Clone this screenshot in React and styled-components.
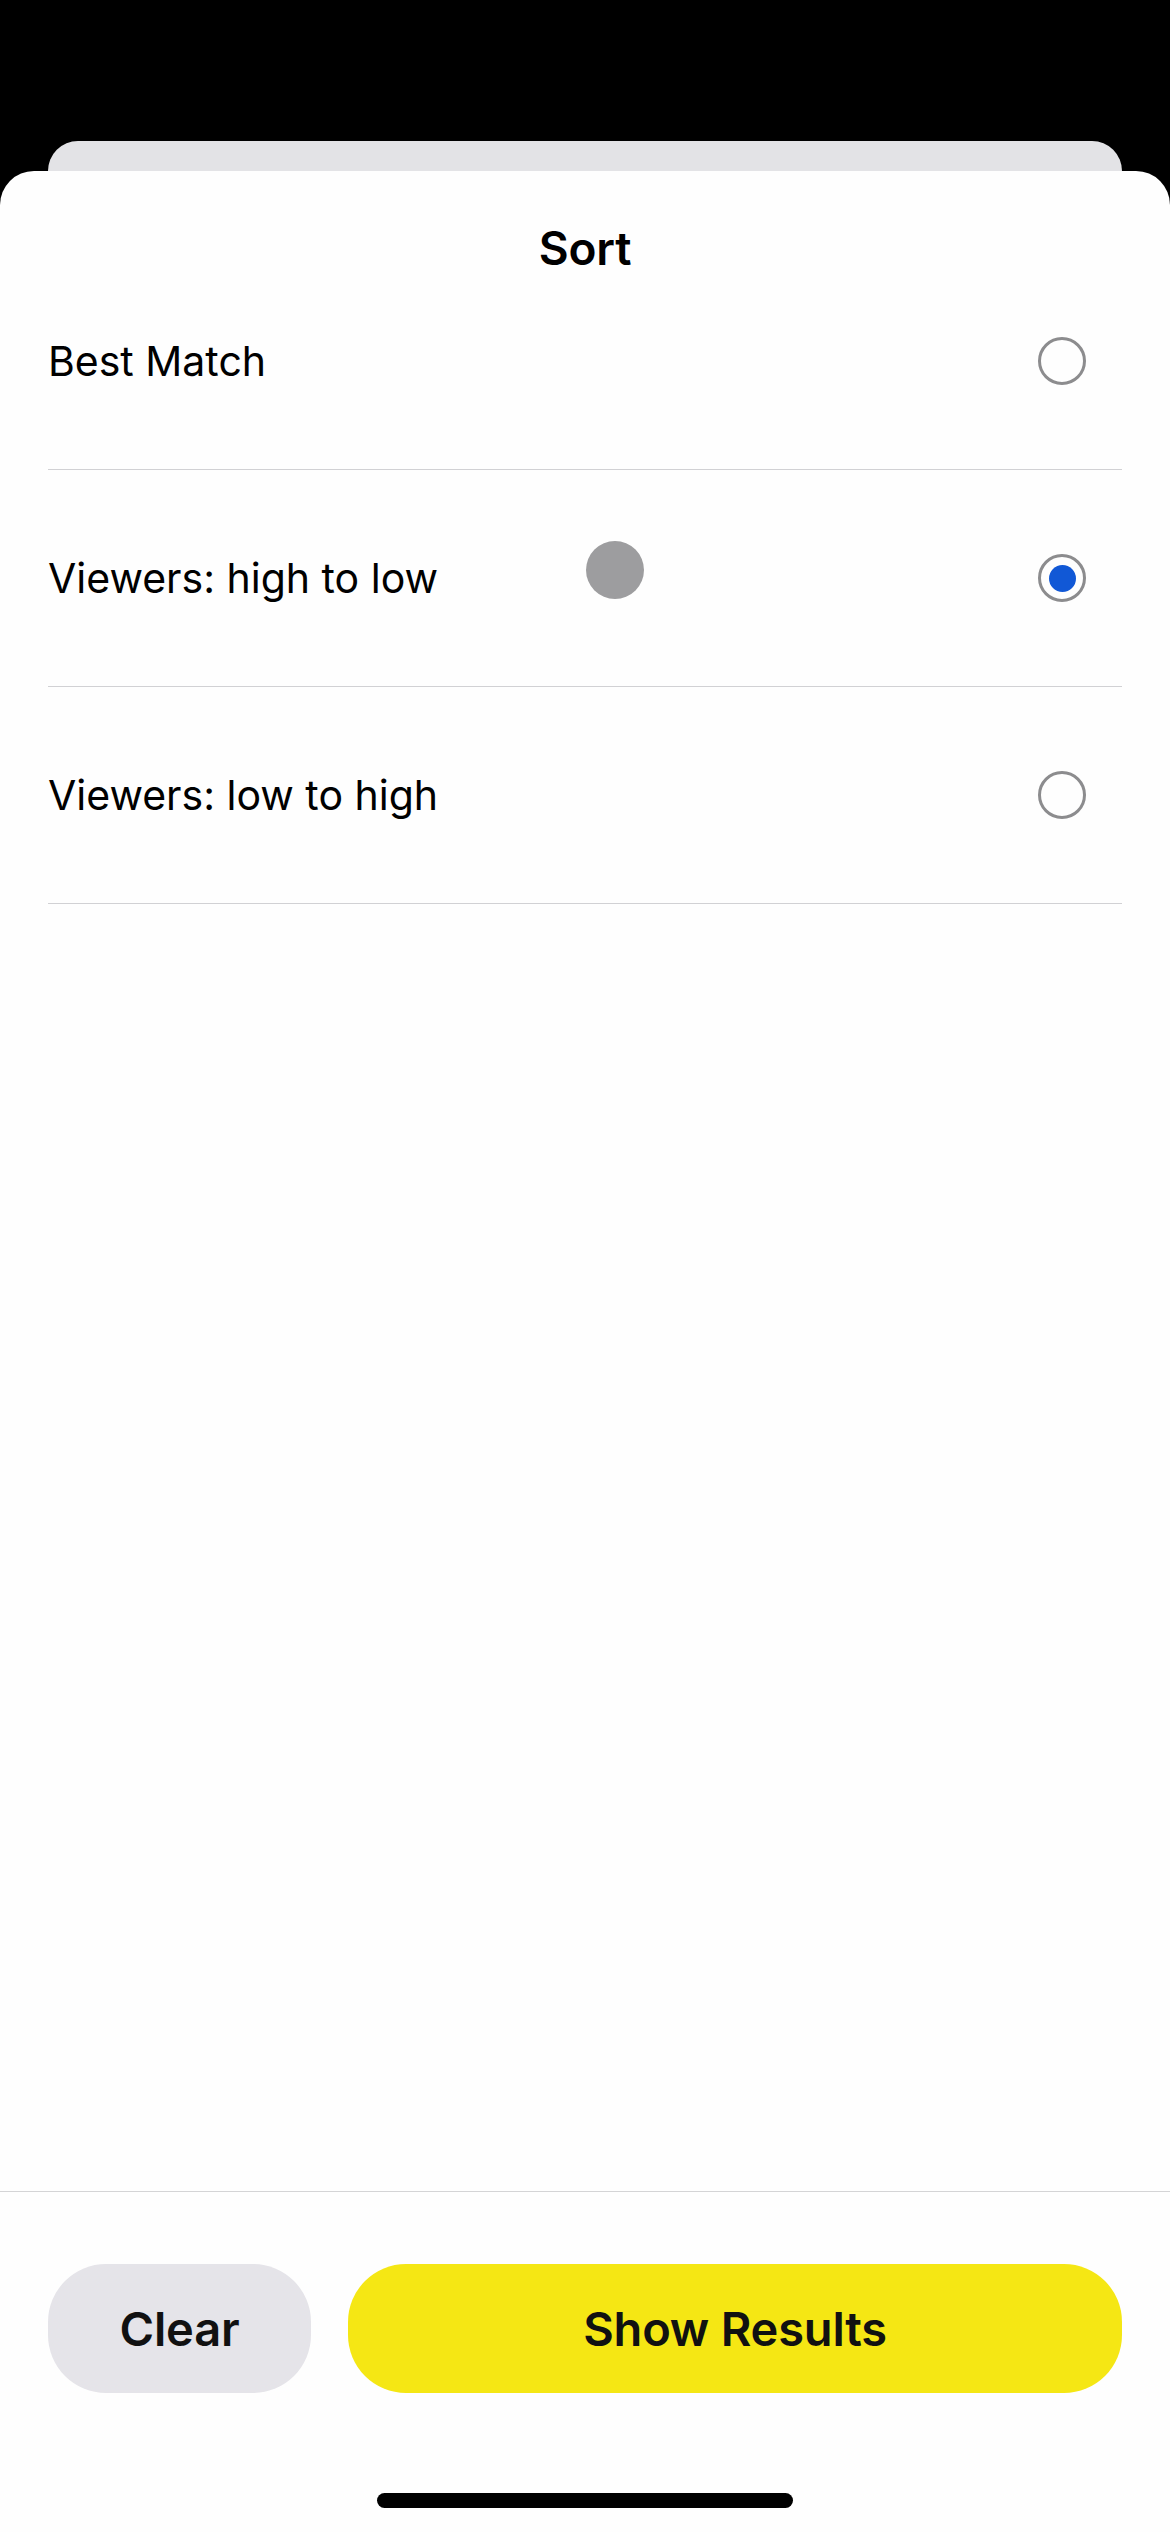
import React from "react";
import styled, { createGlobalStyle } from "styled-components";

const Global = createGlobalStyle`
  html, body { margin: 0; padding: 0; background: #000; }
  body { font-family: Inter, "Noto Sans", "Liberation Sans", sans-serif; -webkit-font-smoothing: antialiased; }
  * { box-sizing: border-box; }
`;

const Screen = styled.div`
  width: 1170px;
  height: 2532px;
  background: #000;
  display: flex;
  flex-direction: column;
  overflow: hidden;
`;

const BackCard = styled.div`
  flex-shrink: 0;
  margin: 141px 48px 0;
  height: 30px;
  background: #e3e3e6;
  border-radius: 30px 30px 0 0;
`;

const Sheet = styled.div`
  position: relative;
  flex: 1;
  background: #fefefe;
  border-radius: 34px 34px 0 0;
  display: flex;
  flex-direction: column;
`;

const Header = styled.div`
  height: 82px;
  flex-shrink: 0;
  display: flex;
  justify-content: center;
`;

const Title = styled.h1`
  margin: 50px 0 0;
  height: 54px;
  line-height: 54px;
  font-size: 46px;
  font-weight: 600;
  color: #000;
  letter-spacing: -0.2px;
`;

const List = styled.div`
  padding: 0 48px;
  display: flex;
  flex-direction: column;
`;

const Row = styled.div`
  height: 217px;
  display: flex;
  align-items: center;
  justify-content: space-between;
  border-bottom: 1px solid #d1d1d4;
`;

const Label = styled.span`
  font-size: 41px;
  font-weight: 400;
  color: #000;
  letter-spacing: 0;
`;

const Radio = styled.span`
  width: 48px;
  height: 48px;
  margin-right: 36px;
  border-radius: 50%;
  border: 3.5px solid #8c8c8e;
  display: flex;
  align-items: center;
  justify-content: center;
  &::after {
    content: "";
    width: 27px;
    height: 27px;
    border-radius: 50%;
    background: ${(p) => (p.$checked ? "#1158d6" : "transparent")};
  }
`;

const TouchDot = styled.div`
  position: absolute;
  left: 586px;
  top: 370px;
  width: 58px;
  height: 58px;
  border-radius: 50%;
  background: #9d9d9f;
`;

const Spacer = styled.div`
  flex: 1;
`;

const Footer = styled.div`
  flex-shrink: 0;
  border-top: 1px solid #d4d4d6;
  padding: 72px 48px 24px;
  display: flex;
  flex-direction: column;
  align-items: center;
`;

const Buttons = styled.div`
  width: 100%;
  display: flex;
  gap: 37px;
`;

const Button = styled.button`
  height: 129px;
  border: none;
  border-radius: 58px;
  font-family: inherit;
  font-size: 47px;
  font-weight: 600;
  color: #111;
  background: ${(p) => (p.$primary ? "#f5e714" : "#e5e4e9")};
  flex: ${(p) => (p.$primary ? "1" : "0 0 263px")};
  letter-spacing: -0.2px;
`;

const HomeBar = styled.div`
  margin-top: 100px;
  width: 416px;
  height: 15px;
  border-radius: 8px;
  background: #000;
`;

const options = [
  { label: "Best Match", checked: false },
  { label: "Viewers: high to low", checked: true },
  { label: "Viewers: low to high", checked: false },
];

export default function App() {
  return (
    <>
      <Global />
      <Screen>
        <BackCard />
        <Sheet>
          <Header>
            <Title>Sort</Title>
          </Header>
          <List>
            {options.map((o) => (
              <Row key={o.label}>
                <Label>{o.label}</Label>
                <Radio $checked={o.checked} />
              </Row>
            ))}
          </List>
          <TouchDot />
          <Spacer />
          <Footer>
            <Buttons>
              <Button>Clear</Button>
              <Button $primary>Show Results</Button>
            </Buttons>
            <HomeBar />
          </Footer>
        </Sheet>
      </Screen>
    </>
  );
}
